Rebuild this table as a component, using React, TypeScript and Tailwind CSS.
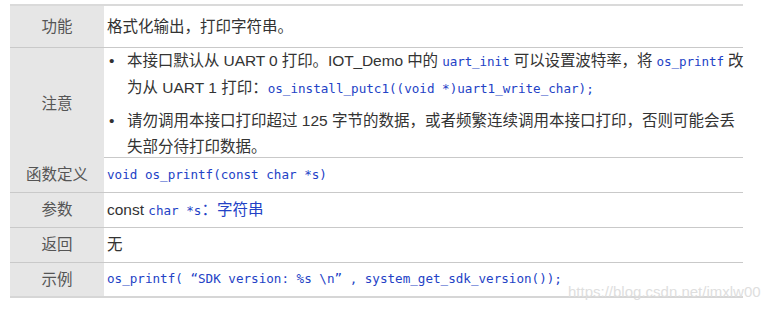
const cn = '"Liberation Sans", "Noto Sans CJK SC", sans-serif'

function Code({ children }: { children: React.ReactNode }) {
  return (
    <span className="font-['DejaVu_Sans_Mono',monospace] text-[12.6px] text-[#2342c6]">{children}</span>
  )
}

function Row({
  label,
  h,
  last,
  children,
}: {
  label: string
  h: string
  last?: boolean
  children: React.ReactNode
}) {
  return (
    <div
      className={`grid grid-cols-[94px_1fr] ${h} ${
        last ? 'border-b-2 border-[#d6d6d6]' : 'border-b border-[#c9c9c9]'
      }`}
    >
      <div className="flex items-center justify-center bg-[#e6e6e6] text-[#555]">{label}</div>
      <div className="flex items-center pl-[3px] text-[#333]">{children}</div>
    </div>
  )
}

function Bullet({ children }: { children: React.ReactNode }) {
  return (
    <div className="flex">
      <span className="w-[20px] shrink-0 pl-[2px] text-[#333]">•</span>
      <div className="whitespace-nowrap">{children}</div>
    </div>
  )
}

export default function App() {
  return (
    <div
      className="relative h-[309px] w-[780px] overflow-hidden bg-white pt-[4px] text-[15.5px]"
      style={{ fontFamily: cn }}
    >
      <div className="ml-[10px] w-[733px] border-t-2 border-[#dadada]">
        <Row label="功能" h="h-[42px]">
          格式化输出，打印字符串。
        </Row>
        <div className="grid h-[110px] grid-cols-[94px_1fr] border-b border-[#c9c9c9]">
          <div className="flex items-center justify-center bg-[#e6e6e6] text-[#555]">注意</div>
          <div className="space-y-[6px] pl-[3px] leading-[26px] text-[#333]">
            <Bullet>
              <span className="tracking-[-0.1px]">
                本接口默认从 UART 0 打印。IOT_Demo 中的 <Code>uart_init</Code> 可以设置波特率，将{' '}
                <Code>os_printf</Code> 改
              </span>
              <br />
              为从 UART 1 打印：<Code>os_install_putc1((void *)uart1_write_char);</Code>
            </Bullet>
            <Bullet>
              请勿调用本接口打印超过 125 字节的数据，或者频繁连续调用本接口打印，否则可能会丢
              <br />
              失部分待打印数据。
            </Bullet>
          </div>
        </div>
        <Row label="函数定义" h="h-[35px]">
          <Code>void os_printf(const char *s)</Code>
        </Row>
        <Row label="参数" h="h-[35px]">
          <span>
            const <Code>char *s</Code>
            <span className="text-[#2342c6]">：字符串</span>
          </span>
        </Row>
        <Row label="返回" h="h-[35px]">
          无
        </Row>
        <Row label="示例" h="h-[35px]" last>
          <Code>os_printf( “SDK version: %s \n” , system_get_sdk_version());</Code>
        </Row>
      </div>
      <span className="absolute left-[568px] top-[281px] font-['Liberation_Sans',sans-serif] text-[15px] text-[#dedede]">
        https://blog.csdn.net/imxlw00
      </span>
    </div>
  )
}
